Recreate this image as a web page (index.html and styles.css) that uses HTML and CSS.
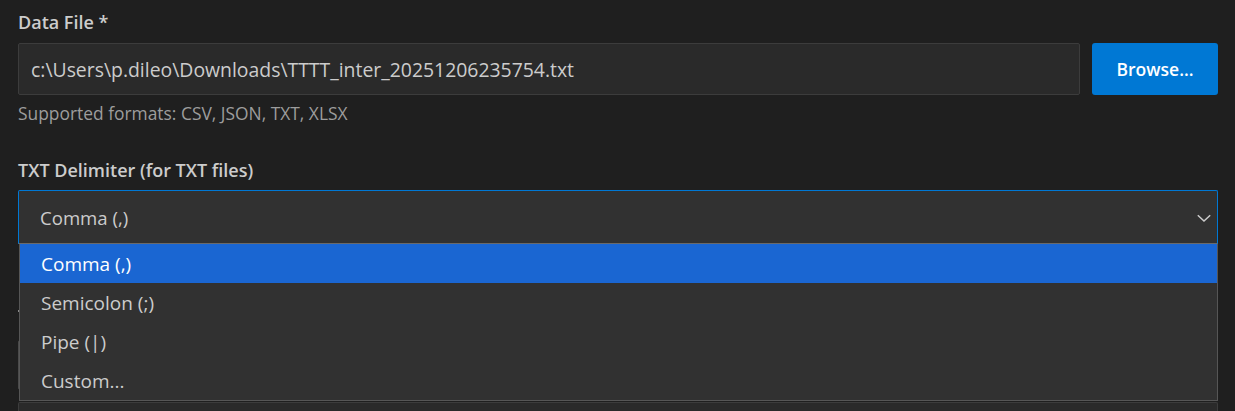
FILE: index.html
```html
<!DOCTYPE html>
<html>
<head>
<meta charset="utf-8">
<link rel="stylesheet" href="styles.css">
</head>
<body>
<div class="form">
  <div class="field">
    <label class="label">Data File *</label>
    <div class="file-row">
      <div class="input">c:\Users\p.dileo\Downloads\TTTT_inter_20251206235754.txt</div>
      <button class="btn">Browse...</button>
    </div>
    <div class="hint">Supported formats: CSV, JSON, TXT, XLSX</div>
  </div>
  <div class="field field2">
    <label class="label">TXT Delimiter (for TXT files)</label>
    <div class="select-wrap">
      <div class="select">
        <span>Comma (,)</span>
        <svg class="chev" width="16" height="16" viewBox="0 0 16 16"><path d="M1.8 5.2 L8 11 L14.2 5.2" fill="none" stroke="#cccccc" stroke-width="1.5"/></svg>
      </div>
      <ul class="menu">
        <li class="opt active">Comma (,)</li>
        <li class="opt">Semicolon (;)</li>
        <li class="opt">Pipe (|)</li>
        <li class="opt">Custom...</li>
      </ul>
    </div>
  </div>
  <div class="field field3">
    <div class="under-label"><span class="mark"></span></div>
    <div class="input under-input"></div>
  </div>
  <div class="input next"></div>
</div>
</body>
</html>
```
FILE: styles.css
```css
html, body {
  margin: 0;
  padding: 0;
  background: #1f1f1f;
  font-family: "Open Sans", "Noto Sans", sans-serif;
  color: #cccccc;
  overflow: hidden;
}
.form {
  display: flex;
  flex-direction: column;
  padding: 10px 17px 0 18px;
}
.field {
  display: flex;
  flex-direction: column;
}
.label {
  font-size: 18px;
  font-weight: 600;
  color: #cccccc;
  height: 24px;
  line-height: 24px;
  margin-bottom: 9px;
}
.file-row {
  display: flex;
  gap: 12px;
}
.input {
  flex: 1;
  height: 52px;
  box-sizing: border-box;
  border: 1px solid #3c3c3c;
  background: #2a2a2a;
  border-radius: 2px;
  padding: 0 12px;
  display: flex;
  align-items: center;
  font-size: 19.4px;
  color: #cccccc;
}
.btn {
  width: 126px;
  height: 52px;
  flex: none;
  border: none;
  border-radius: 3px;
  background: #0078d4;
  color: #ffffff;
  font-family: inherit;
  font-size: 17.5px;
  font-weight: 600;
  padding: 0;
}
.hint {
  margin-top: 6px;
  font-size: 17.4px;
  color: #9d9d9d;
  height: 24px;
  line-height: 24px;
}
.field2 {
  margin-top: 33px;
}
.field2 .label {
  margin-bottom: 8px;
}
.select-wrap {
  position: relative;
}
.select {
  height: 54px;
  box-sizing: border-box;
  border: 1px solid #0078d4;
  border-bottom-color: #6a6a6a;
  border-radius: 2px 2px 0 0;
  background: #313131;
  padding: 0 5px 0 21px;
  display: flex;
  align-items: center;
  justify-content: space-between;
  font-size: 18.6px;
  color: #cccccc;
}
.chev {
  margin-top: 1px;
}
.menu {
  position: absolute;
  top: 54px;
  left: 1px;
  right: 0;
  margin: 0;
  padding: 0;
  list-style: none;
  background: #313131;
  border: 1px solid #565656;
  border-top: none;
  z-index: 2;
}
.opt {
  height: 39px;
  line-height: 40px;
  padding-left: 21px;
  font-size: 19px;
  color: #cccccc;
}
.opt.active {
  background: #1a66d2;
  color: #ffffff;
}
.field3 {
  margin-top: 50px;
}
.under-label {
  height: 24px;
  margin-bottom: 22px;
}
.mark {
  display: block;
  width: 2px;
  height: 2px;
  background: #8a8a8a;
  margin-top: 16px;
}
.under-input {
  flex: none;
  height: 50px;
  border-color: #4a4a4a;
}
.next {
  flex: none;
  margin-top: 12px;
  height: 9px;
  border-bottom: none;
  border-radius: 2px 2px 0 0;
}
```
